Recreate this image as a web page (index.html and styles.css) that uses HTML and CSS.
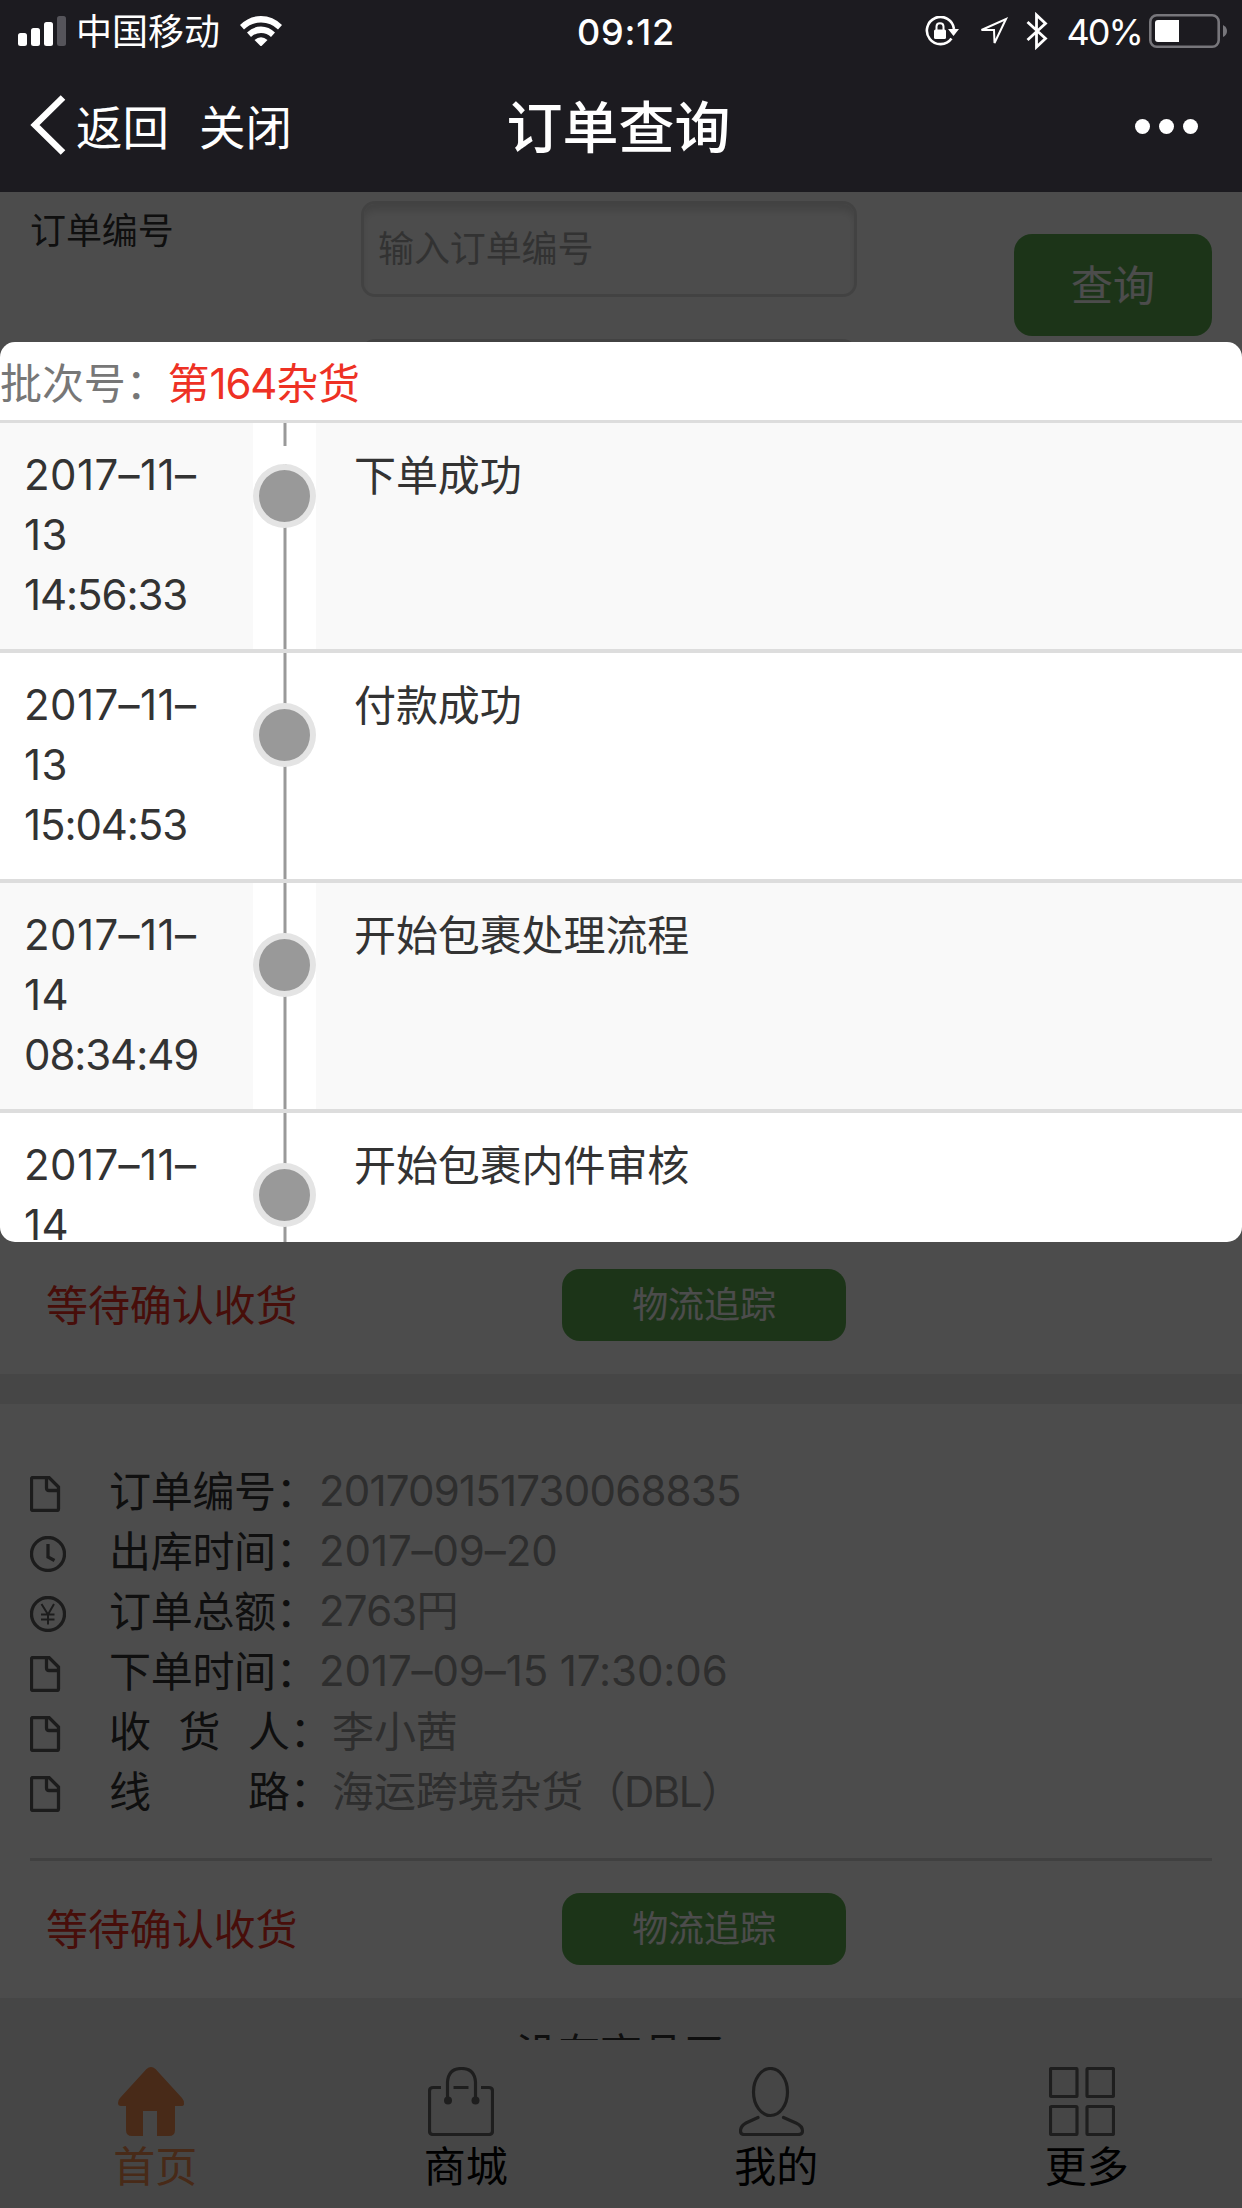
FILE: index.html
```html
<!DOCTYPE html>
<html lang="zh-CN">
<head>
<meta charset="utf-8">
<title>订单查询</title>
<link rel="stylesheet" href="styles.css">
</head>
<body>
<svg width="0" height="0" class="defs" aria-hidden="true">
  <symbol id="doc" viewBox="0 0 36 36"><path d="M3 1.500H19L28.500 11V33Q28.500 34.500 27 34.500H3Q1.500 34.500 1.500 33V3Q1.500 1.500 3 1.500ZM16.500 2V12Q16.500 14.500 19 14.500H28"/></symbol>
  <symbol id="clock" viewBox="0 0 36 36"><circle cx="18" cy="18" r="16.500"/><path d="M18 8V21L24.500 24.500"/></symbol>
  <symbol id="yen" viewBox="0 0 36 36"><circle cx="18" cy="18" r="16.500"/><path stroke-width="2" d="M11.500 8L18 18.500L24 8M18 18.500V28.500M11 18.500H24.500M11 23.500H24.500"/></symbol>
</svg>
<div class="app">
  <header class="top">
    <div class="status-bar">
      <div class="status-left">
        <svg class="signal" width="48" height="30" viewBox="0 0 48 30" fill="#fff"><rect y="17" width="9" height="13" rx="2.500"/><rect x="13" y="12" width="9" height="18" rx="2.500"/><rect x="26" y="6" width="9" height="24" rx="2.500"/><rect x="39" width="9" height="30" rx="2.500" fill="#55545a"/></svg>
        <span class="carrier">中国移动</span>
        <svg width="42" height="30" viewBox="0 0 42 30" fill="#fff"><path d="M0 9Q9 0 21 0T42 9L38 13.500Q31 6.500 21 6.500T4 13.500Z"/><path d="M7 16.500Q13 10.500 21 10.500T35 16.500L31 21Q27 17 21 17T11 21Z"/><path d="M14.500 24Q21 18.500 27.500 24L21 30.500Z"/></svg>
      </div>
      <span class="time">09:12</span>
      <div class="status-right">
        <svg class="lock" width="36" height="30" viewBox="0 0 36 30"><path d="M26.500 22.500A13.600 13.600 0 1 1 29 13" fill="none" stroke="#fff" stroke-width="2.600"/><path d="M23 13H34L28.500 20Z" fill="#fff"/><rect x="9" y="13.500" width="12" height="9.500" rx="1.500" fill="#fff"/><path d="M11.500 14V10.500Q11.500 7.200 15 7.200T18.500 10.500V14" fill="none" stroke="#fff" stroke-width="2"/></svg>
        <svg class="arrow" width="30" height="30" viewBox="0 0 30 30"><path d="M2.500 14L27 3L15.500 27L15 14Z" fill="none" stroke="#fff" stroke-width="2"/></svg>
        <svg class="bluetooth" width="22" height="38" viewBox="0 0 22 38"><path d="M1.500 10L19.500 26.500L10.500 35V3L19.500 11.500L1.500 28" fill="none" stroke="#fff" stroke-width="2.800"/></svg>
        <span class="percent">40%</span>
        <svg width="79" height="34" viewBox="0 0 79 34"><rect x="1.300" y="1.300" width="68.400" height="31.400" rx="6.500" fill="none" stroke="#77767b" stroke-width="2.600"/><path d="M9 6H30V28H9Q6 28 6 25V9Q6 6 9 6Z" fill="#fff"/><path d="M74 11Q78 13 78 17T74 23Z" fill="#77767b"/></svg>
      </div>
    </div>
    <nav class="nav-bar">
      <div class="nav-left">
        <svg width="36" height="60" viewBox="0 0 36 60"><path d="M33 2.500L5 30L33 57.500" fill="none" stroke="#fff" stroke-width="6.500"/></svg>
        <span class="back">返回</span>
        <span class="close">关闭</span>
      </div>
      <h1>订单查询</h1>
      <div class="dots"><i></i><i></i><i></i></div>
    </nav>
  </header>

  <div class="body">
    <main class="page">
      <section class="search">
        <label class="search-label">订单编号</label>
        <div class="search-fields">
          <div class="field">输入订单编号</div>
          <div class="field"></div>
        </div>
        <div class="search-btn">查询</div>
      </section>
      <section class="card first">
        <div class="card-foot"><span class="state">等待确认收货</span><span class="track">物流追踪</span></div>
      </section>
      <section class="card second">
        <div class="rows">
          <div class="row"><svg class="ico"><use href="#doc"/></svg><span class="key">订单编号：</span><span class="val num">201709151730068835</span></div>
          <div class="row"><svg class="ico"><use href="#clock"/></svg><span class="key">出库时间：</span><span class="val">2017–09–20</span></div>
          <div class="row"><svg class="ico"><use href="#yen"/></svg><span class="key">订单总额：</span><span class="val num">2763円</span></div>
          <div class="row"><svg class="ico"><use href="#doc"/></svg><span class="key">下单时间：</span><span class="val">2017–09–15 17:30:06</span></div>
          <div class="row"><svg class="ico"><use href="#doc"/></svg><span class="key wide"><b>收</b><b>货</b><b>人：</b></span><span class="val han">李小茜</span></div>
          <div class="row"><svg class="ico"><use href="#doc"/></svg><span class="key wide"><b>线</b><b>路：</b></span><span class="val han">海运跨境杂货<span class="latin">（DBL）</span></span></div>
        </div>
        <div class="card-foot"><span class="state">等待确认收货</span><span class="track">物流追踪</span></div>
      </section>
      <p class="no-more">没有商品了</p>
    </main>
    <footer class="tabs">
      <div class="tab active">
        <svg width="66" height="69" viewBox="0 0 66 69"><path fill="#f08c50" d="M28.500 2Q33 -2 37.500 2L64 31Q66 33 66 37Q66 39 63 39H57V63Q57 69 51 69H39V44H25V69H14Q8 69 8 63V39H3Q0 39 0 36Q0 33 2 31Z"/></svg>
        <span>首页</span>
      </div>
      <div class="tab">
        <svg width="66" height="69" viewBox="0 0 66 69"><path d="M13 20.500H5Q1.500 20.500 1.500 24V64Q1.500 67.500 5 67.500H61Q64.500 67.500 64.500 64V24Q64.500 20.500 61 20.500H53M25.500 20.500H40.500M19.500 33V15Q20.500 1.500 33.500 1.500T47.500 15V33"/><g fill="#666" stroke="none"><circle cx="20" cy="33.500" r="4"/><circle cx="47.500" cy="33.500" r="4"/></g></svg>
        <span>商城</span>
      </div>
      <div class="tab">
        <svg width="66" height="69" viewBox="0 0 66 69"><ellipse cx="31.500" cy="25" rx="17" ry="23.500"/><path stroke-linecap="round" d="M19 50.500L7 56Q1.500 59 1.500 64Q1.500 67.500 5 67.500H59Q63.500 67.500 63.500 64Q63.500 59 57 56L44.500 50.500"/></svg>
        <span>我的</span>
      </div>
      <div class="tab">
        <svg width="66" height="69" viewBox="0 0 66 69"><rect x="1.500" y="1.500" width="26.500" height="28" rx="1"/><rect x="38" y="1.500" width="26.500" height="28" rx="1"/><rect x="1.500" y="39.500" width="26.500" height="28" rx="1"/><rect x="38" y="39.500" width="26.500" height="28" rx="1"/></svg>
        <span>更多</span>
      </div>
    </footer>
    <div class="overlay"></div>
    <div class="modal">
      <div class="modal-head">批次号：<span>第<span class="digits">164</span>杂货</span></div>
      <div class="step start"><div class="when">2017–11–<br>13<br><span class="clock">14:56:33</span></div><div class="line"><i></i></div><div class="what">下单成功</div></div>
      <div class="step"><div class="when">2017–11–<br>13<br><span class="clock">15:04:53</span></div><div class="line"><i></i></div><div class="what">付款成功</div></div>
      <div class="step"><div class="when">2017–11–<br>14<br><span class="clock">08:34:49</span></div><div class="line"><i></i></div><div class="what">开始包裹处理流程</div></div>
      <div class="step"><div class="when">2017–11–<br>14</div><div class="line"><i></i></div><div class="what">开始包裹内件审核</div></div>
    </div>
  </div>
</div>
</body>
</html>
```
FILE: styles.css
```css
* { box-sizing: border-box; }
body {
  margin: 0;
  font-family: Inter, "Noto Sans CJK SC", sans-serif;
  font-size: 42px;
  line-height: 60px;
  letter-spacing: -.1px;
  color: #333;
}
svg { display: block; flex: none; }
.defs { position: absolute; }
.app { width: 1242px; height: 2208px; display: flex; flex-direction: column; overflow: hidden; }

/* status bar and navigation */
.top { height: 192px; flex: none; background: #1c1b20; color: #fff; }
.status-bar { height: 60px; display: grid; grid-template-columns: 1fr auto 1fr; align-items: center; font-size: 36px; letter-spacing: 0; }
.status-left { display: flex; align-items: center; padding-left: 18px; }
.carrier { margin: 0 20px 0 10px; padding-top: 2px; }
.time { font-weight: 500; letter-spacing: .8px; padding: 1px 0 0 10px; }
.status-right { display: flex; align-items: center; justify-content: flex-end; padding-right: 14px; }
.lock { margin-right: 18px; }
.arrow { margin-right: 17px; }
.bluetooth { margin-right: 18px; }
.percent { margin-right: 7px; padding-top: 1px; letter-spacing: -1.900px; }
.nav-bar { height: 132px; padding-bottom: 2px; display: grid; grid-template-columns: 1fr auto 1fr; align-items: center; font-size: 46.500px; letter-spacing: 0; }
.nav-left { display: flex; align-items: center; padding-left: 30px; }
.nav-left span { padding-top: 6px; }
.back { margin-left: 10px; }
.close { margin-left: 30px; }
.nav-bar h1 { margin: 0; padding: 5px 5px 0 0; font-size: 56px; font-weight: 500; }
.dots { display: flex; justify-content: flex-end; gap: 9px; padding: 2px 44px 0 0; }
.dots i { width: 15px; height: 15px; border-radius: 50%; background: #fff; }

/* page */
.body { position: relative; flex: 1; display: flex; flex-direction: column; }
.page { height: 1848px; overflow: hidden; background: #ebebeb; }
.search { height: 300px; background: #fff; display: flex; align-items: flex-start; padding: 9px 30px 0; font-size: 36px; }
.search-label { width: 331px; }
.search-fields { display: flex; flex-direction: column; gap: 42px; width: 496px; margin-right: 157px; }
.field { height: 96px; border: 3px solid #dedede; border-radius: 14px; padding: 0 14px; line-height: 90px; color: #a9a9a9; box-shadow: inset 0 8px 8px -2px rgba(0, 0, 0, .14); }
.search-btn { width: 198px; height: 102px; margin-top: 33px; border-radius: 18px; background: #5fb053; color: #fff; font-size: 42px; line-height: 103px; text-align: center; }
.card { background: #fff; display: flex; flex-direction: column; }
.card.first { height: 882px; justify-content: flex-end; }
.card.second { height: 594px; margin-top: 30px; padding-top: 57px; }
.rows { height: 399px; padding: 0 30px; }
.row { height: 60px; display: flex; align-items: center; }
.ico { width: 36px; height: 36px; margin: 6px 43px 0 0; fill: none; stroke: #606060; stroke-width: 3.300; }
.key { width: 210px; padding-top: 1px; color: #333; letter-spacing: -.3px; }
.key.wide { width: 223px; display: flex; justify-content: space-between; }
.key b { font-weight: 400; width: 42px; white-space: nowrap; }
.key b:last-child { width: 84px; }
.val { color: #999; white-space: nowrap; }
.val.num { letter-spacing: -.8px; }
.val.han { padding-top: 1px; }
.latin { letter-spacing: -1.500px; }
.card-foot { height: 138px; display: flex; align-items: center; padding-left: 46px; }
.second .card-foot { height: 141px; margin: 0 30px; padding-left: 16px; border-top: 3px solid #d8d8d8; }
.state { width: 516px; padding-top: 2px; color: #ee3124; }
.track { width: 284px; height: 72px; border-radius: 18px; background: #5fb053; color: #fff; font-size: 36px; line-height: 73px; text-align: center; }
.no-more { margin: 0; padding-top: 26px; text-align: center; }

/* bottom tabs */
.tabs { height: 168px; display: flex; background: #ebebeb; color: #000; }
.tab { flex: 1; display: flex; flex-direction: column; align-items: center; padding-top: 27px; }
.tab svg { margin: 0 9px 1px 0; fill: none; stroke: #666; stroke-width: 3.200; }
.tab.active { color: #f08c50; }
.tab.active svg { stroke: none; }

/* tracking dialog over the dimmed page */
.overlay { position: absolute; inset: 0; background: rgba(0, 0, 0, .7); }
.modal { position: absolute; left: 0; right: 0; top: 150px; height: 900px; border-radius: 15px; background: #fff; overflow: hidden; }
.modal-head { height: 81px; border-bottom: 3px solid #ddd; color: #777; line-height: 84px; }
.modal-head span { color: #ee3124; }
.modal-head .digits { letter-spacing: -1.200px; }
.step { height: 230px; display: grid; grid-template-columns: 253px 63px 1fr; border-bottom: 4px solid #ddd; }
.step:nth-child(even) { background: #f9f9f9; }
.when { padding: 22px 0 0 24px; letter-spacing: .4px; }
.when .clock { letter-spacing: -1.100px; }
.what { padding: 23px 0 0 38px; }
.line { background: linear-gradient(90deg, #ccc 1px, #999 1px, #999 3px, #ccc 3px) 30px 0 / 4px 100% no-repeat #fff; padding-top: 50px; }
.line i { display: block; width: 63px; height: 64px; border: 6px solid #e4e4e4; border-radius: 50%; background: #999; }
.start .line { padding-top: 23px; }
.start .line::before { content: ""; display: block; height: 18px; background: #fff; }
```
